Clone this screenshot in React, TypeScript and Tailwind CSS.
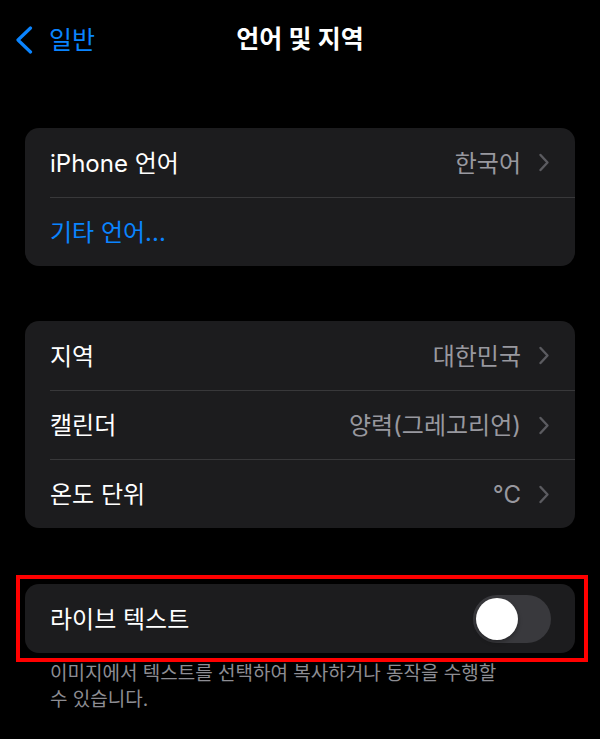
const FONT = { fontFamily: 'Inter, "Noto Sans CJK KR", sans-serif' };

type Row = { label: string; value?: string; blue?: boolean };

const LANG_ROWS: Row[] = [
  { label: 'iPhone 언어', value: '한국어' },
  { label: '기타 언어...', blue: true },
];

const REGION_ROWS: Row[] = [
  { label: '지역', value: '대한민국' },
  { label: '캘린더', value: '양력(그레고리언)' },
  { label: '온도 단위', value: '°C' },
];

function Chevron() {
  return (
    <svg width="12" height="19" viewBox="0 0 12 19" fill="none" className="text-[#5b5b60]">
      <path d="M2.5 2 L9.5 9.5 L2.5 17" stroke="currentColor" strokeWidth="2.4" strokeLinecap="round" strokeLinejoin="round" />
    </svg>
  );
}

function Group({ rows }: { rows: Row[] }) {
  return (
    <div className="mx-[25px] rounded-[14px] bg-[#1c1c1e] overflow-hidden">
      {rows.map((r, i) => (
        <div key={r.label} className="pl-[25px]">
          <div className={`h-[69px] flex items-center pr-[25px] ${i > 0 ? 'border-t border-[#38383a]' : ''}`}>
            <span className={`text-[24px] flex-1 pt-[2px] ${r.blue ? 'text-[#0a84ff]' : 'text-white'}`}>{r.label}</span>
            {r.value && (
              <div className="flex items-center gap-[17px]">
                <span className="text-[24px] pt-[2px] text-[#98989f]">{r.value}</span>
                <Chevron />
              </div>
            )}
          </div>
        </div>
      ))}
    </div>
  );
}

export default function App() {
  return (
    <div className="w-[600px] h-[739px] bg-black overflow-hidden" style={FONT}>
      {/* Nav */}
      <div className="h-[80px] relative flex items-center justify-center">
        <div className="absolute left-[15px] top-[26px] flex items-center gap-[16px] text-[#0a84ff]">
          <svg width="18" height="28" viewBox="0 0 18 28" fill="none">
            <path d="M15.5 2 L3 14 L15.5 26" stroke="currentColor" strokeWidth="3.2" strokeLinecap="round" strokeLinejoin="round" />
          </svg>
          <span className="text-[25px] leading-none">일반</span>
        </div>
        <span className="text-[25px] font-semibold text-white">언어 및 지역</span>
      </div>

      <div className="mt-[48px]">
        <Group rows={LANG_ROWS} />
      </div>

      <div className="mt-[55px]">
        <Group rows={REGION_ROWS} />
      </div>

      {/* Live text */}
      <div className="mt-[56px] relative mx-[25px]">
        <div className="rounded-[14px] bg-[#1c1c1e] h-[69px] flex items-center pl-[25px] pr-[24px]">
          <span className="text-[24px] pt-[2px] text-white flex-1">라이브 텍스트</span>
          <div className="w-[78px] h-[48px] rounded-full bg-[#39393d] p-[3px] flex items-center">
            <div className="w-[42px] h-[42px] rounded-full bg-white shadow-[0_2px_4px_rgba(0,0,0,0.35)]" />
          </div>
        </div>
        <div className="absolute -left-[9px] -right-[13px] -top-[9px] -bottom-[9px] border-[4px] border-[#ff0000] pointer-events-none" />
      </div>
      <p className="mt-[8px] pl-[50px] pr-[100px] text-[19px] leading-[26px] text-[#8d8d93]">
        이미지에서 텍스트를 선택하여 복사하거나 동작을 수행할 수 있습니다.
      </p>
    </div>
  );
}
